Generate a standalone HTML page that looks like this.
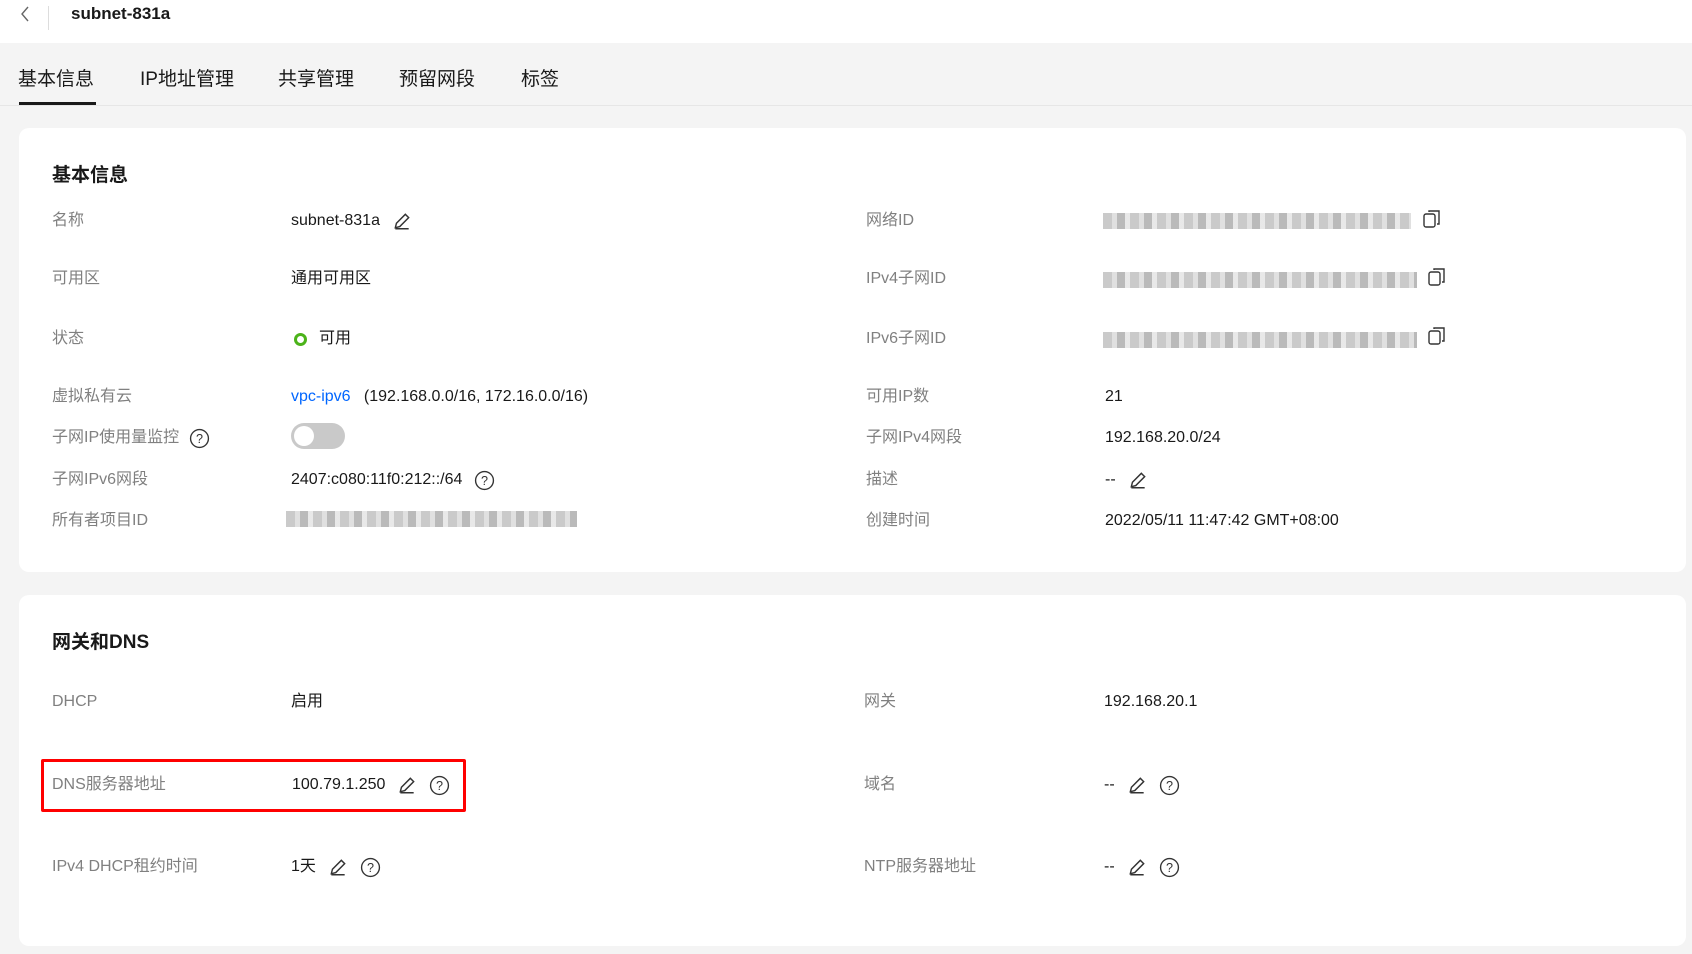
<!DOCTYPE html>
<html><head><meta charset="utf-8"><style>
*{margin:0;padding:0;box-sizing:border-box}
body{width:1692px;height:954px;background:#f4f4f4;font-family:"Liberation Sans","Noto Sans CJK SC",sans-serif;position:relative;overflow:hidden;color:#191919}
.a{position:absolute;white-space:nowrap}
.hdr{position:absolute;left:0;top:0;width:1692px;height:43px;background:#fff}
.card{position:absolute;left:19px;width:1667px;background:#fff;border-radius:10px}
.l{position:absolute;font-size:16px;line-height:22px;height:22px;margin-top:-9px;color:#808080;white-space:nowrap}
.v{position:absolute;font-size:16px;line-height:22px;height:22px;margin-top:-9px;color:#191919;white-space:nowrap;display:flex;align-items:center}
.tab{position:absolute;top:64px;font-size:19px;color:#191919}
.blur{position:absolute;height:16px;margin-top:-8px;background:repeating-linear-gradient(90deg,#bdbdbd 0 9px,#d8d8d8 9px 14px,#a9a9a9 14px 22px,#e3e3e3 22px 27px);opacity:.8}
svg{display:block}
</style></head><body>
<div class="hdr"></div>
<svg class="a" style="left:18px;top:5px" width="14" height="18" viewBox="0 0 14 18"><path d="M10 2L4 9l6 7" fill="none" stroke="#666" stroke-width="1.4"/></svg>
<div class="a" style="left:48px;top:6px;width:1px;height:24px;background:#ddd"></div>
<div class="a" style="left:71px;top:4px;font-size:17px;font-weight:bold">subnet-831a</div>

<div class="tab" style="left:18px">基本信息</div>
<div class="tab" style="left:140px">IP地址管理</div>
<div class="tab" style="left:278px">共享管理</div>
<div class="tab" style="left:399px">预留网段</div>
<div class="tab" style="left:521px">标签</div>
<div class="a" style="left:0;top:105px;width:1692px;height:1px;background:#e6e6e6"></div>
<div class="a" style="left:19px;top:102px;width:77px;height:3px;background:#191919"></div>

<div class="card" style="top:128px;height:444px"></div>
<div class="a" style="left:52px;top:160px;font-size:19px;font-weight:bold">基本信息</div>

<div class="l" style="left:52px;top:219px">名称</div>
<div class="v" style="left:291px;top:219px">subnet-831a<svg style="margin-left:12px" width="20" height="20" viewBox="0 0 18 18"><path d="M3 15l1-4 8-8 3 3-8 8z M3 16h12" fill="none" stroke="#333" stroke-width="1.3"/></svg></div>
<div class="l" style="left:52px;top:277px">可用区</div>
<div class="v" style="left:291px;top:277px">通用可用区</div>
<div class="l" style="left:52px;top:337px">状态</div>
<div class="v" style="left:294px;top:337px"><span style="width:13px;height:13px;border:3px solid #4cb31a;border-radius:50%;display:inline-block;margin-right:12px"></span>可用</div>
<div class="l" style="left:52px;top:395px">虚拟私有云</div>
<div class="v" style="left:291px;top:395px"><span style="color:#0066ff">vpc-ipv6</span>&nbsp;&nbsp;&nbsp;(192.168.0.0/16, 172.16.0.0/16)</div>
<div class="l" style="left:52px;top:436px;display:flex;align-items:center">子网IP使用量监控<svg style="margin-left:10px" width="21" height="21" viewBox="0 0 20 20"><circle cx="10" cy="10" r="8.5" fill="none" stroke="#333" stroke-width="1.3"/><text x="10" y="14.5" font-size="12" text-anchor="middle" fill="#333" font-family="Liberation Sans">?</text></svg></div>
<div class="a" style="left:291px;top:423px;width:54px;height:26px;border-radius:13px;background:#c9c9c9"><div style="position:absolute;left:3px;top:3px;width:20px;height:20px;border-radius:50%;background:#fff"></div></div>
<div class="l" style="left:52px;top:478px">子网IPv6网段</div>
<div class="v" style="left:291px;top:478px">2407:c080:11f0:212::/64<svg style="margin-left:12px" width="21" height="21" viewBox="0 0 20 20"><circle cx="10" cy="10" r="8.5" fill="none" stroke="#333" stroke-width="1.3"/><text x="10" y="14.5" font-size="12" text-anchor="middle" fill="#333" font-family="Liberation Sans">?</text></svg></div>
<div class="l" style="left:52px;top:519px">所有者项目ID</div>
<div class="blur" style="left:286px;top:519px;width:291px"></div>

<div class="l" style="left:866px;top:219px">网络ID</div>
<div class="blur" style="left:1103px;top:221px;width:308px"></div>
<svg class="a" style="left:1422px;top:208px" width="20" height="22" viewBox="0 0 20 22"><rect x="2" y="6" width="11" height="13" rx="2" fill="none" stroke="#333" stroke-width="1.4"/><path d="M7 4V3h10v13h-2" fill="none" stroke="#333" stroke-width="1.4"/></svg>
<div class="l" style="left:866px;top:277px">IPv4子网ID</div>
<div class="blur" style="left:1103px;top:280px;width:314px"></div>
<svg class="a" style="left:1427px;top:266px" width="20" height="22" viewBox="0 0 20 22"><rect x="2" y="6" width="11" height="13" rx="2" fill="none" stroke="#333" stroke-width="1.4"/><path d="M7 4V3h10v13h-2" fill="none" stroke="#333" stroke-width="1.4"/></svg>
<div class="l" style="left:866px;top:337px">IPv6子网ID</div>
<div class="blur" style="left:1103px;top:340px;width:314px"></div>
<svg class="a" style="left:1427px;top:325px" width="20" height="22" viewBox="0 0 20 22"><rect x="2" y="6" width="11" height="13" rx="2" fill="none" stroke="#333" stroke-width="1.4"/><path d="M7 4V3h10v13h-2" fill="none" stroke="#333" stroke-width="1.4"/></svg>
<div class="l" style="left:866px;top:395px">可用IP数</div>
<div class="v" style="left:1105px;top:395px">21</div>
<div class="l" style="left:866px;top:436px">子网IPv4网段</div>
<div class="v" style="left:1105px;top:436px">192.168.20.0/24</div>
<div class="l" style="left:866px;top:478px">描述</div>
<div class="v" style="left:1105px;top:478px">--<svg style="margin-left:12px" width="20" height="20" viewBox="0 0 18 18"><path d="M3 15l1-4 8-8 3 3-8 8z M3 16h12" fill="none" stroke="#333" stroke-width="1.3"/></svg></div>
<div class="l" style="left:866px;top:519px">创建时间</div>
<div class="v" style="left:1105px;top:519px">2022/05/11 11:47:42 GMT+08:00</div>

<div class="card" style="top:595px;height:351px"></div>
<div class="a" style="left:52px;top:627px;font-size:19px;font-weight:bold">网关和DNS</div>
<div class="l" style="left:52px;top:700px">DHCP</div>
<div class="v" style="left:291px;top:700px">启用</div>
<div class="l" style="left:52px;top:783px">DNS服务器地址</div>
<div class="v" style="left:292px;top:783px">100.79.1.250<svg style="margin-left:12px" width="20" height="20" viewBox="0 0 18 18"><path d="M3 15l1-4 8-8 3 3-8 8z M3 16h12" fill="none" stroke="#333" stroke-width="1.3"/></svg><svg style="margin-left:12px" width="21" height="21" viewBox="0 0 20 20"><circle cx="10" cy="10" r="8.5" fill="none" stroke="#333" stroke-width="1.3"/><text x="10" y="14.5" font-size="12" text-anchor="middle" fill="#333" font-family="Liberation Sans">?</text></svg></div>
<div class="a" style="left:41px;top:759px;width:425px;height:53px;border:3px solid #f00;border-radius:2px"></div>
<div class="l" style="left:52px;top:865px">IPv4 DHCP租约时间</div>
<div class="v" style="left:291px;top:865px">1天<svg style="margin-left:12px" width="20" height="20" viewBox="0 0 18 18"><path d="M3 15l1-4 8-8 3 3-8 8z M3 16h12" fill="none" stroke="#333" stroke-width="1.3"/></svg><svg style="margin-left:12px" width="21" height="21" viewBox="0 0 20 20"><circle cx="10" cy="10" r="8.5" fill="none" stroke="#333" stroke-width="1.3"/><text x="10" y="14.5" font-size="12" text-anchor="middle" fill="#333" font-family="Liberation Sans">?</text></svg></div>

<div class="l" style="left:864px;top:700px">网关</div>
<div class="v" style="left:1104px;top:700px">192.168.20.1</div>
<div class="l" style="left:864px;top:783px">域名</div>
<div class="v" style="left:1104px;top:783px">--<svg style="margin-left:12px" width="20" height="20" viewBox="0 0 18 18"><path d="M3 15l1-4 8-8 3 3-8 8z M3 16h12" fill="none" stroke="#333" stroke-width="1.3"/></svg><svg style="margin-left:12px" width="21" height="21" viewBox="0 0 20 20"><circle cx="10" cy="10" r="8.5" fill="none" stroke="#333" stroke-width="1.3"/><text x="10" y="14.5" font-size="12" text-anchor="middle" fill="#333" font-family="Liberation Sans">?</text></svg></div>
<div class="l" style="left:864px;top:865px">NTP服务器地址</div>
<div class="v" style="left:1104px;top:865px">--<svg style="margin-left:12px" width="20" height="20" viewBox="0 0 18 18"><path d="M3 15l1-4 8-8 3 3-8 8z M3 16h12" fill="none" stroke="#333" stroke-width="1.3"/></svg><svg style="margin-left:12px" width="21" height="21" viewBox="0 0 20 20"><circle cx="10" cy="10" r="8.5" fill="none" stroke="#333" stroke-width="1.3"/><text x="10" y="14.5" font-size="12" text-anchor="middle" fill="#333" font-family="Liberation Sans">?</text></svg></div>
</body></html>
